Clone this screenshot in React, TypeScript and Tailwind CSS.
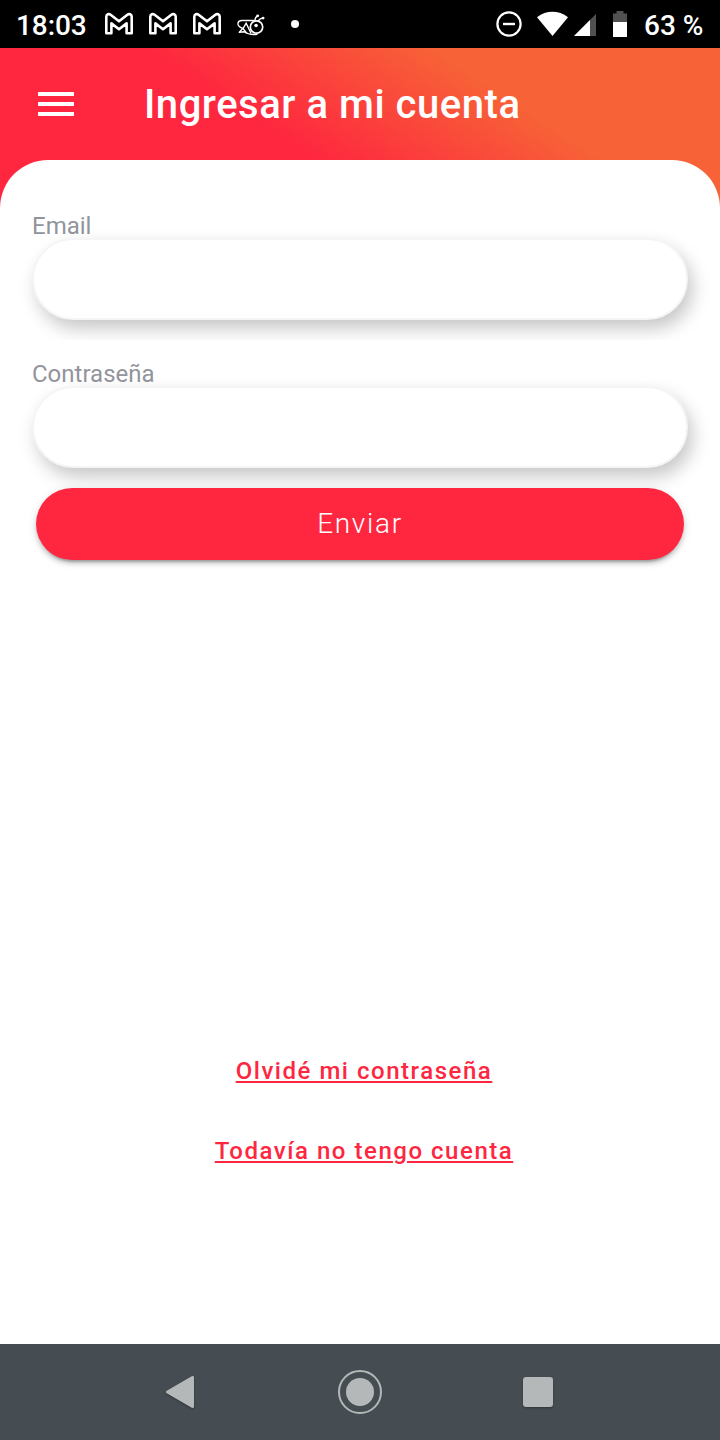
function MailIcon() {
  return (
    <svg width="30" height="24" viewBox="0 0 30 24" fill="none" className="shrink-0">
      <path
        d="M2.3 21.3V4.8C2.3 2.2 4.8 1.4 6.6 2.8L15 9.3L23.4 2.8C25.2 1.4 27.7 2.2 27.7 4.8V21.3H22.6V11.4L15 17.2L7.4 11.4V21.3Z"
        stroke="white"
        strokeWidth="2.6"
        strokeLinejoin="round"
      />
    </svg>
  );
}

function BeeIcon() {
  return (
    <svg width="30" height="24" viewBox="0 0 30 24" fill="none" stroke="white" strokeWidth="1.4" strokeLinecap="round" strokeLinejoin="round" className="shrink-0">
      <g transform="translate(.7 0)">
        <path d="M17 8.5H5C1 8.5 .2 12.4 2.6 14.6C3.6 15.5 5 16 6.4 16.6" />
        <path d="M9.5 11.2C8 14.5 5.5 17.5 2.6 20.2L7.6 19.8C10.5 22 15.5 22.8 20.3 22.3" />
        <path d="M9.5 11.2L14 20.8M6.5 16.8L9.6 20.6" />
        <circle cx="19.8" cy="15" r="6.2" strokeWidth="1.7" />
        <circle cx="19.4" cy="13.5" r="1.8" fill="white" stroke="none" />
        <path d="M18.1 8.8C18.3 6.4 19.1 4.8 20.8 3.9M21.6 8.9C22.4 7.3 24.1 6.3 26.4 6.1" />
        <circle cx="21" cy="3.8" r="1.4" fill="white" stroke="none" />
        <circle cx="26.4" cy="6.1" r="1.4" fill="white" stroke="none" />
      </g>
    </svg>
  );
}

function StatusBar() {
  return (
    <div className="flex h-12 items-center bg-black pl-4 pr-4 text-[28px] font-medium leading-none text-white">
      <span className="w-[88px] pt-[3px] tracking-[-0.1px]">18:03</span>
      <div className="flex gap-[14px]">
        <MailIcon />
        <MailIcon />
        <MailIcon />
        <BeeIcon />
      </div>
      <span className="ml-[25px] size-2 rounded-full bg-white" />
      <div className="ml-auto flex items-center">
        <svg width="140" height="48" viewBox="492 0 140 48">
          <circle cx="509" cy="24" r="11.6" fill="none" stroke="white" strokeWidth="2.2" />
          <path d="M503 24H515" stroke="white" strokeWidth="2.4" />
          <path d="M537 17.2C546.5 10 558.5 10 568 17.2L552.5 36Z" fill="white" />
          <path d="M596 14V36H574Z" fill="#515151" />
          <path d="M590 20V36H574Z" fill="white" />
          <path d="M616.5 11H623.5V13.5H627V22H613V13.5H616.5Z" fill="#515151" />
          <path d="M613 22H627V37H613Z" fill="white" />
        </svg>
        <span className="ml-3 w-[60px] whitespace-nowrap pt-[3px]">63 %</span>
      </div>
    </div>
  );
}

function Field({ label, type }: { label: string; type: string }) {
  return (
    <label className="block h-[148px] overflow-hidden px-8 pt-5 text-2xl leading-[28px] text-[#92949c]">
      <span className="block h-[26px]">{label}</span>
      <input
        type={type}
        className="block h-[82px] w-full rounded-full border-2 border-[#f5f5f5] bg-white px-8 shadow-[5px_9px_18px_rgba(0,0,0,0.22)] outline-none"
      />
    </label>
  );
}

export default function App() {
  return (
    <div className="flex h-[1440px] w-[720px] flex-col bg-white font-['Roboto',sans-serif]">
      <StatusBar />
      <div className="flex flex-1 flex-col bg-[linear-gradient(33deg,#fe273f_40.5%,#f76237_70%)] bg-[length:720px_160px] bg-no-repeat">
        <header className="flex h-28 items-center pl-[38px]">
          <button className="flex w-9 flex-col gap-[6px]" aria-label="Menu">
            <span className="h-1 bg-white" />
            <span className="h-1 bg-white" />
            <span className="h-1 bg-white" />
          </button>
          <h1 className="ml-[70px] pt-[2px] text-[40px] font-medium leading-none tracking-[0.53px] text-white">Ingresar a mi cuenta</h1>
        </header>
        <main className="flex flex-1 flex-col rounded-t-[48px] bg-white pt-8">
          <Field label="Email" type="email" />
          <Field label="Contraseña" type="password" />
          <button className="mx-9 h-[72px] rounded-full bg-[#fe273f] text-[28px] font-light tracking-[1.7px] text-white shadow-[0_6px_2px_-4px_rgba(0,0,0,0.2),0_4px_4px_rgba(0,0,0,0.14),0_2px_10px_rgba(0,0,0,0.12)]">
            Enviar
          </button>
          <nav className="mt-auto flex flex-col items-center gap-[52px] pb-[179px] pl-2 text-2xl font-medium leading-[28px] tracking-[1.53px] text-[#fe273f]">
            <a href="#" className="underline decoration-2 underline-offset-[2px]">Olvidé mi contraseña</a>
            <a href="#" className="underline decoration-2 underline-offset-[2px]">Todavía no tengo cuenta</a>
          </nav>
        </main>
      </div>
      <footer className="flex h-24 items-center bg-[#454d52] pl-[164px]">
        <svg width="32" height="40" viewBox="0 0 32 40" className="drop-shadow-[0_1px_1px_rgba(0,0,0,0.3)]">
          <path d="M3.5 20L28.5 5.5V34.5Z" fill="#b4b8b9" stroke="#b4b8b9" strokeWidth="3" strokeLinejoin="round" />
        </svg>
        <svg width="44" height="44" viewBox="0 0 44 44" className="ml-[142px]">
          <circle cx="22" cy="22" r="21" fill="none" stroke="#b4b8b9" strokeWidth="2" />
          <circle cx="22" cy="22" r="14" fill="#b4b8b9" />
        </svg>
        <span className="ml-[141px] size-[30px] rounded-[3px] bg-[#b4b8b9] shadow-[0_1px_2px_rgba(0,0,0,0.3)]" />
      </footer>
    </div>
  );
}
